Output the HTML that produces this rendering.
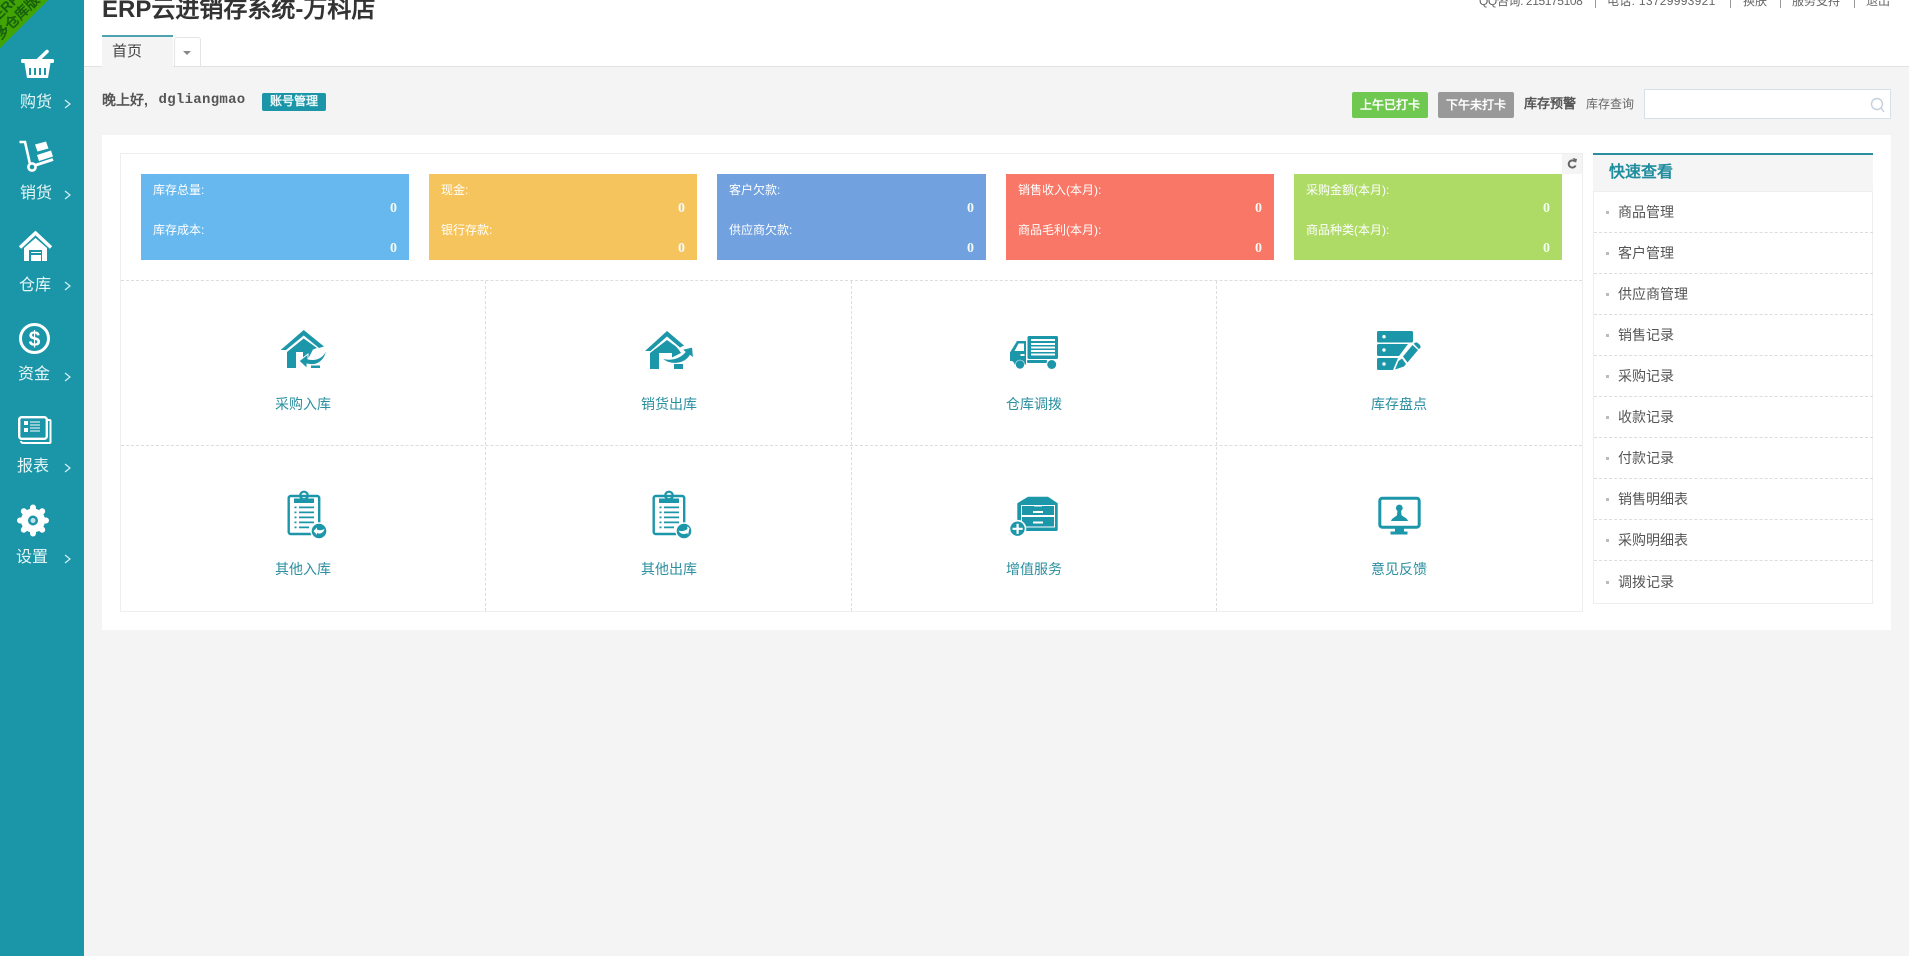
<!DOCTYPE html>
<html lang="zh"><head><meta charset="utf-8"><title>ERP云进销存系统-万科店</title>
<style>
html,body{margin:0;padding:0;width:1909px;height:956px;overflow:hidden;background:#f4f4f4}
body{position:relative;font-family:"Liberation Sans","WenQuanYi Zen Hei",sans-serif;font-size:14px;color:#555}
div,span{position:absolute;white-space:nowrap}
#side{left:0;top:0;width:84px;height:956px;background:#1b96a9}
#head{left:84px;top:0;width:1825px;height:66px;background:#fff;border-bottom:1px solid #e2e2e2;box-sizing:content-box}
.lab{color:#e6f6f6;font-size:16px;line-height:20px}
.top{font-size:12px;color:#666;line-height:16px;top:-7px}
.sep{width:1px;height:8px;top:0;background:#999}
.card{top:174px;width:268px;height:86px;color:#fff;font-size:12px}
.card span{line-height:16px;left:12px}
.card b{position:absolute;right:12px;font:bold 14px/16px "Liberation Serif",serif;color:#f4fbf4}
.t{top:8px}.n1{top:27px}.t2{top:48px}.n2{top:67px}
.lb{color:#2a8f9f;font-size:14px;line-height:20px;width:120px;text-align:center}
.q{left:1618px;color:#555;font-size:14px;line-height:20px}
.d{left:1594px;width:279px;height:0;border-top:1px dashed #ddd}
.dot{left:1606px;width:3px;height:3px;background:#bbb}
.btn{top:92px;height:26px;width:76px;line-height:26px;text-align:center;color:#fff;font-weight:bold;font-size:12px;border-radius:2px}
</style></head><body>
<div id="head"></div>
<div id="side"></div>

<!-- corner ribbon -->
<div style="left:0;top:0;width:48px;height:48px;overflow:hidden">
<div style="left:-34px;top:-34px;width:68px;height:68px;background:#42a304;transform:rotate(45deg)"></div>
<div style="left:-23px;top:-3px;width:70px;text-align:center;color:#17600c;font-size:14px;font-weight:bold;line-height:15px;transform:rotate(-45deg)">ERP<br>多仓库版</div>
</div>

<!-- sidebar labels -->
<div class="lab" style="left:20px;top:93px">购货</div>
<div class="lab" style="left:20px;top:184px">销货</div>
<div class="lab" style="left:19px;top:276px">仓库</div>
<div class="lab" style="left:18px;top:365px">资金</div>
<div class="lab" style="left:17px;top:457px">报表</div>
<div class="lab" style="left:16px;top:548px">设置</div>

<!-- header -->
<div style="left:102px;top:-5px;font-size:24px;font-weight:bold;color:#333;line-height:30px">ERP云进销存系统-万科店</div>
<div class="top" style="left:1479px;letter-spacing:-.4px">QQ咨询: 215175108</div><div class="sep" style="left:1595px"></div>
<div class="top" style="left:1607px;letter-spacing:.3px">电话: 13729993921</div><div class="sep" style="left:1730px"></div>
<div class="top" style="left:1743px">换肤</div><div class="sep" style="left:1780px"></div>
<div class="top" style="left:1792px">服务支持</div><div class="sep" style="left:1854px"></div>
<div class="top" style="left:1866px">退出</div>

<div style="left:102px;top:35px;width:71px;height:32px;background:#f4f4f4;border-top:2px solid #4fa3b0;box-sizing:border-box"></div>
<div style="left:112px;top:42px;font-size:15px;line-height:20px;color:#444">首页</div>
<div style="left:174px;top:37px;width:27px;height:29px;background:#fff;border:1px solid #e4e4e4;border-bottom:0;border-radius:3px 3px 0 0;box-sizing:border-box"></div>
<div style="left:183px;top:51px;width:0;height:0;border:4px solid transparent;border-top:4px solid #888;border-bottom:0"></div>

<!-- greeting row -->
<div style="left:102px;top:90px;line-height:20px;font-weight:bold;color:#555;font-size:14px">晚上好,</div>
<div style="left:158.500px;top:90px;line-height:20px;font-weight:bold;color:#555;font-size:14px;font-family:'Liberation Mono',monospace;letter-spacing:.3px">dgliangmao</div>
<div style="left:262px;top:93px;width:64px;height:18px;background:#1b96a9;border-radius:2px;color:#eaf7f8;font-size:12px;font-weight:bold;line-height:17px;text-align:center">账号管理</div>
<div class="btn" style="left:1352px;background:#6fc950">上午已打卡</div>
<div class="btn" style="left:1438px;background:#999">下午未打卡</div>
<div style="left:1524px;top:95px;font-size:13px;font-weight:bold;line-height:18px;color:#555">库存预警</div>
<div style="left:1586px;top:95px;font-size:12px;line-height:18px;color:#666">库存查询</div>
<div style="left:1644px;top:89px;width:247px;height:30px;background:#fff;border:1px solid #d8dfe6;box-sizing:border-box"></div>

<!-- main panel -->
<div style="left:102px;top:135px;width:1789px;height:495px;background:#fff"></div>
<div style="left:120px;top:153px;width:1463px;height:459px;border:1px solid #eee;box-sizing:border-box"></div>
<div style="left:1562px;top:154px;width:20px;height:20px;background:#f4f4f4"></div>

<div class="card" style="left:141px;background:#67b8ee"><span class="t">库存总量:</span><b class="n1">0</b><span class="t2">库存成本:</span><b class="n2">0</b></div>
<div class="card" style="left:429px;background:#f6c45c"><span class="t">现金:</span><b class="n1">0</b><span class="t2">银行存款:</span><b class="n2">0</b></div>
<div class="card" style="left:717px;width:269px;background:#71a1df"><span class="t">客户欠款:</span><b class="n1">0</b><span class="t2">供应商欠款:</span><b class="n2">0</b></div>
<div class="card" style="left:1006px;background:#f97766"><span class="t">销售收入(本月):</span><b class="n1">0</b><span class="t2">商品毛利(本月):</span><b class="n2">0</b></div>
<div class="card" style="left:1294px;background:#aedb66"><span class="t">采购金额(本月):</span><b class="n1">0</b><span class="t2">商品种类(本月):</span><b class="n2">0</b></div>

<!-- grid lines -->
<div style="left:121px;top:280px;width:1461px;border-top:1px dashed #ddd"></div>
<div style="left:121px;top:445px;width:1461px;border-top:1px dashed #ddd"></div>
<div style="left:485px;top:281px;height:330px;border-left:1px dashed #ddd"></div>
<div style="left:851px;top:281px;height:330px;border-left:1px dashed #ddd"></div>
<div style="left:1216px;top:281px;height:330px;border-left:1px dashed #ddd"></div>

<div class="lb" style="left:243px;top:394px">采购入库</div>
<div class="lb" style="left:609px;top:394px">销货出库</div>
<div class="lb" style="left:974px;top:394px">仓库调拨</div>
<div class="lb" style="left:1339px;top:394px">库存盘点</div>
<div class="lb" style="left:243px;top:559px">其他入库</div>
<div class="lb" style="left:609px;top:559px">其他出库</div>
<div class="lb" style="left:974px;top:559px">增值服务</div>
<div class="lb" style="left:1339px;top:559px">意见反馈</div>

<!-- quick panel -->
<div style="left:1593px;top:153px;width:280px;height:451px;background:#fff;border:1px solid #eee;border-top:0;box-sizing:border-box"></div>
<div style="left:1593px;top:153px;width:280px;height:39px;background:#f5f5f5;border-top:2px solid #2b8e9e;border-bottom:1px solid #eee;box-sizing:border-box"></div>
<div style="left:1609px;top:163px;font-size:16px;font-weight:bold;line-height:20px;color:#1f8d9e">快速查看</div>
<div class="q" style="top:202px">商品管理</div><div class="dot" style="top:211px"></div><div class="d" style="top:232px"></div>
<div class="q" style="top:243px">客户管理</div><div class="dot" style="top:252px"></div><div class="d" style="top:273px"></div>
<div class="q" style="top:284px">供应商管理</div><div class="dot" style="top:293px"></div><div class="d" style="top:314px"></div>
<div class="q" style="top:325px">销售记录</div><div class="dot" style="top:334px"></div><div class="d" style="top:355px"></div>
<div class="q" style="top:366px">采购记录</div><div class="dot" style="top:375px"></div><div class="d" style="top:396px"></div>
<div class="q" style="top:407px">收款记录</div><div class="dot" style="top:416px"></div><div class="d" style="top:437px"></div>
<div class="q" style="top:448px">付款记录</div><div class="dot" style="top:457px"></div><div class="d" style="top:478px"></div>
<div class="q" style="top:489px">销售明细表</div><div class="dot" style="top:498px"></div><div class="d" style="top:519px"></div>
<div class="q" style="top:530px">采购明细表</div><div class="dot" style="top:539px"></div><div class="d" style="top:560px"></div>
<div class="q" style="top:572px">调拨记录</div><div class="dot" style="top:581px"></div>

<!-- all icons -->
<svg width="1909" height="956" viewBox="0 0 1909 956" style="position:absolute;left:0;top:0" xmlns="http://www.w3.org/2000/svg">
<!-- sidebar chevrons -->
<g fill="none" stroke="#d5eff2" stroke-width="1.2">
<path d="M65 100l5 4-5 4M65 191l5 4-5 4M65 282l5 4-5 4M65 373l5 4-5 4M65 464l5 4-5 4M65 555l5 4-5 4"/>
</g>
<!-- basket -->
<g fill="#fff">
<path d="M35 63L47 51.500" stroke="#fff" stroke-width="3.600" stroke-linecap="round"/>
<rect x="21" y="59" width="33" height="4" rx="1.500"/>
<path d="M24.500 63H50.500L48 78H27Z"/>
<path d="M29 68h2v7h-2zM34 68h2v7h-2zM39 68h2v7h-2zM44 68h2v7h-2z" fill="#1b96a9"/>
</g>
<!-- hand truck -->
<g>
<path d="M19.500 142H25L30 164" fill="none" stroke="#fff" stroke-width="2.600"/>
<path d="M33 166L53 159.500" fill="none" stroke="#fff" stroke-width="3"/>
<circle cx="32" cy="167" r="3.600" fill="#1b96a9" stroke="#fff" stroke-width="2.600"/>
<path d="M35 144.500L46 141.500 48.500 148.500 37.500 151.500ZM37 155L51 150.500 53 156.500 39 161Z" fill="#fff"/>
</g>
<!-- warehouse -->
<g>
<path d="M20 247.500L35.500 233 51 247.500" fill="none" stroke="#fff" stroke-width="3.400"/>
<path d="M24 248L35.500 238 47 248V261H24Z" fill="#fff"/>
<path d="M29 250H42V261H29Z" fill="#1b96a9"/>
<path d="M31 255H41V261H31Z" fill="#fff"/>
<path d="M31 252H41V253H31Z" fill="#fff"/>
</g>
<!-- dollar -->
<circle cx="34.500" cy="338.500" r="14" fill="none" stroke="#fff" stroke-width="3"/>
<text x="34.500" y="346" text-anchor="middle" font-family="Liberation Sans" font-weight="bold" font-size="21" fill="#fff">$</text>
<!-- report -->
<g>
<path d="M48 420h1.500a1 1 0 0 1 1 1V442a1 1 0 0 1-1 1H23a2 2 0 0 1-2-2" fill="none" stroke="#fff" stroke-width="2"/>
<rect x="19.200" y="417.200" width="27.600" height="21.600" rx="2.500" fill="#1b96a9" stroke="#fff" stroke-width="2.400"/>
<path d="M24 421h4v4h-4zM24 428h4v4h-4z" fill="#fff"/>
<path d="M30 422h10M30 425h10M30 428h10M30 431h10" stroke="#fff" stroke-width="1"/>
</g>
<!-- gear -->
<g stroke="#fff" fill="none">
<circle cx="33" cy="520.500" r="8.500" stroke-width="7"/>
<path d="M33 507.500v3M33 530.500v3M20 520.500h3M43 520.500h3M23.800 511.300l2.200 2.200M40 527.500l2.200 2.200M23.800 529.700l2.200-2.200M40 513.500l2.200-2.200" stroke-width="6" stroke-linecap="round"/>
</g>
<circle cx="33" cy="520.500" r="2.500" fill="#bfe3e8"/>
<!-- search icon -->
<g fill="none" stroke="#c3d0dc" stroke-width="1.400"><circle cx="1877" cy="104" r="5.500"/><path d="M1881 108l3 4"/></g>
<!-- refresh -->
<g fill="none" stroke="#666" stroke-width="2"><path d="M1575 161.500a3.600 3.600 0 1 0 .6 4"/></g>
<path d="M1572.500 158l4.500 1-1 4Z" fill="#666"/>

<g fill="#1c96a9">
<!-- house in -->
<path d="M303.700 330L280.700 350H286L303.700 335.500 319 348 324 346.500Z"/>
<path d="M303.700 338.500L287 352V368H296V352H303V359H308L313 349.500 317 348Z"/>
<path d="M326.500 347C325 357 317 361 308 359V354L299 361 307 368.500V364C318 367 327 359 326.500 347Z" stroke="#fff" stroke-width="1"/>
<path d="M311 365.500H320V368H311Z"/>
<!-- house out -->
<path d="M667 331L645 351H650.500L667 336.500 680 347.500 684 345.500Z"/>
<path d="M667 340L650 353V369H659V353H672V357.500L681 353 679 350 676 346.500Z"/>
<path d="M661.500 358C671 361 680 358 685 352L682 349.500 692.500 347 693.500 358 690 355.500C684 365 669 366 661.500 358Z" stroke="#fff" stroke-width="1"/>
<path d="M674 364H683V369H674Z"/>
<!-- truck -->
<rect x="1027.500" y="336" width="30.500" height="23" rx="1.500"/>
<path d="M1031 339h24v2h-24zM1031 343h24v2h-24zM1031 346.500h24v2h-24zM1031 350h24v2h-24zM1031 353.500h24v2h-24z" fill="#fff"/>
<path d="M1017 341H1026V364.500H1014.500A4.500 4.500 0 0 0 1012 361H1010V352.500Z"/>
<path d="M1018.500 343.500H1024V351H1014.500Z" fill="#fff"/>
<path d="M1020.500 354h4v2h-4z" fill="#fff"/>
<rect x="1027" y="360" width="20" height="3" rx="1"/>
<circle cx="1020" cy="364.500" r="4.500" stroke="#fff" stroke-width=".6"/><circle cx="1051.700" cy="364.500" r="4.500"/>
<!-- server + pencil -->
<rect x="1377" y="331" width="36" height="11.500" rx="1.500"/>
<path d="M1378.500 344H1408L1399 356H1378.500A1.500 1.500 0 0 1 1377 354.500V345.500A1.500 1.500 0 0 1 1378.500 344Z"/>
<path d="M1378.500 358H1398L1393 370H1378.500A1.500 1.500 0 0 1 1377 368.500V359.500A1.500 1.500 0 0 1 1378.500 358Z"/>
<circle cx="1384" cy="336.700" r="1.700" fill="#fff"/><circle cx="1384" cy="350" r="1.700" fill="#fff"/><circle cx="1384" cy="364" r="1.700" fill="#fff"/>
<path d="M1395 369.500L1398.500 361 1402 358.500 1406 364 1404 366.500ZM1403 356.500L1412.500 345 1418 350 1407.500 362.500Z"/>
<path d="M1413.700 343.700L1415.500 342.500Q1417 342 1419 344 1421 346 1420.500 347.500L1419 349.200Z"/>
<!-- clipboard 1 -->
<g>
<rect x="288.700" y="496" width="30.500" height="38" rx="2" fill="none" stroke="#1c96a9" stroke-width="2.400"/>
<circle cx="304" cy="495.500" r="3.800" fill="none" stroke="#1c96a9" stroke-width="2.200"/>
<path d="M294 498.500H314V503H294Z"/>
<path d="M299 506.500h15v1.800h-15zM299 511.500h15v1.800h-15zM299 516.500h15v1.800h-15zM299 521.500h15v1.800h-15zM299 526.500h10v1.800h-10z"/>
<path d="M294.500 506.500h2v1.800h-2zM294.500 511.500h2v1.800h-2zM294.500 516.500h2v1.800h-2zM294.500 521.500h2v1.800h-2zM294.500 526.500h2v1.800h-2z"/>
<circle cx="319" cy="531" r="8" stroke="#fff" stroke-width="1.400"/>
<path d="M313.500 531L317 527.500V529.500C320 531 322 530 324.500 529 323.500 533 320 534.500 317 533V535Z" fill="#fff"/>
</g>
<!-- clipboard 2 -->
<g>
<rect x="653.700" y="496" width="30.500" height="38" rx="2" fill="none" stroke="#1c96a9" stroke-width="2.400"/>
<circle cx="669" cy="495.500" r="3.800" fill="none" stroke="#1c96a9" stroke-width="2.200"/>
<path d="M659 498.500H679V503H659Z"/>
<path d="M664 506.500h15v1.800h-15zM664 511.500h15v1.800h-15zM664 516.500h15v1.800h-15zM664 521.500h15v1.800h-15zM664 526.500h10v1.800h-10z"/>
<path d="M659.500 506.500h2v1.800h-2zM659.500 511.500h2v1.800h-2zM659.500 516.500h2v1.800h-2zM659.500 521.500h2v1.800h-2zM659.500 526.500h2v1.800h-2z"/>
<circle cx="684" cy="531" r="8" stroke="#fff" stroke-width="1.400"/>
<path d="M689.500 528L687 526.500 687.500 529C684 531.500 681 531.500 678.500 530.500 680 534 684 535 687.500 533L688 535Z" fill="#fff"/>
</g>
<!-- cabinet -->
<path d="M1017.300 503.300L1028 496.700H1048L1057.700 503.300V529.500A1.500 1.500 0 0 1 1056.200 531H1018.800A1.500 1.500 0 0 1 1017.300 529.500Z"/>
<path d="M1021 505H1055V527.500H1021Z" fill="#fff"/>
<path d="M1022 506H1054V515H1022ZM1022 517H1054V526.500H1022Z"/>
<path d="M1033 511H1043V513H1033ZM1033 521.500H1043V523.500H1033Z" fill="#fff"/>
<path d="M1034 505h8v1.500h-8z" fill="#fff"/>
<circle cx="1017.500" cy="528.700" r="8" stroke="#fff" stroke-width="1.600"/>
<path d="M1016.500 523.700h2.200v4h4v2.200h-4v4h-2.200v-4h-4v-2.200h4z" fill="#fff"/>
<!-- monitor -->
<rect x="1379.800" y="498.200" width="39.400" height="29" rx="2.500" fill="none" stroke="#1c96a9" stroke-width="3"/>
<path d="M1395 528.500H1404V532H1395ZM1390.500 531.500H1407.500V534.500H1390.500Z"/>
<circle cx="1399.300" cy="508" r="3.400"/>
<path d="M1397.500 510H1401L1401.500 515C1403 517 1407 517.500 1408 521H1391C1392 517.500 1396 517 1397 515Z"/>
</g>
</svg>
</body></html>
